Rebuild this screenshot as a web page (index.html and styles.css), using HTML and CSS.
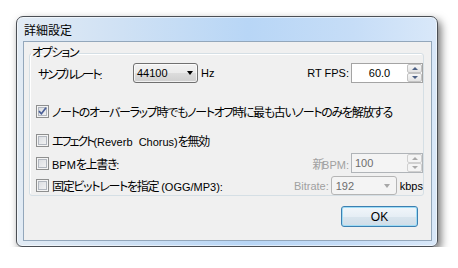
FILE: index.html
```html
<!DOCTYPE html>
<html lang="ja">
  <head>
    <meta charset="UTF-8" />
    <title>詳細設定</title>
    <link rel="stylesheet" href="styles.css">
  </head>
  <body>
    <div class="window">
      <div class="title">詳細設定</div>
      <div class="client">
        <fieldset class="group">
          <legend><span class="jp">オプション</span></legend>

          <div class="row row-rate">
            <span class="rate-label"><span class="jp kana">サンプルレート</span>:</span>
            <div class="combo combo-rate"><span class="combo-text">44100</span><i class="arrow"></i></div>
            <span class="unit">Hz</span>
            <span class="fill"></span>
            <span class="side-label">RT FPS:</span>
            <div class="spin">
              <span class="spin-value centered">60.0</span>
              <div class="spin-btns"><b class="up"></b><b class="down"></b></div>
            </div>
          </div>

          <div class="row row-overlap">
            <span class="check checked">
              <svg width="9" height="9" viewBox="0 0 9 9"><path d="M1 4.2 L3.4 6.8 L8 0.8" fill="none" stroke="#4a5f97" stroke-width="1.7"/></svg>
            </span>
            <span class="check-text jp">ノートのオーバーラップ時でもノートオフ時に最も古いノートのみを解放する</span>
          </div>

          <div class="row row-effect">
            <span class="check"></span>
            <span class="check-text"><span class="jp kana">エフェクト</span>(Reverb&nbsp;&nbsp;Chorus)<span class="jp">を無効</span></span>
          </div>

          <div class="row row-bpm">
            <span class="check"></span>
            <span class="check-text">BPM<span class="jp">を上書き</span>:</span>
            <span class="fill"></span>
            <span class="side-label disabled"><span class="jp tight">新</span>BPM:</span>
            <div class="spin spin-off">
              <span class="spin-value">100</span>
              <div class="spin-btns"><b class="up"></b><b class="down"></b></div>
            </div>
          </div>

          <div class="row row-bitrate">
            <span class="check"></span>
            <span class="check-text"><span class="jp">固定ビットレートを指定</span> (OGG/MP3):</span>
            <span class="fill"></span>
            <span class="side-label disabled">Bitrate:</span>
            <div class="combo combo-off"><span class="combo-text">192</span><i class="arrow"></i></div>
            <span class="unit">kbps</span>
          </div>
        </fieldset>

        <div class="actions">
          <button class="ok">OK</button>
        </div>
      </div>
    </div>
  </body>
</html>
```

FILE: styles.css
```css
body {
  margin: 0;
  background: #ffffff;
  font-family: "Liberation Sans", "Noto Sans CJK JP", sans-serif;
  font-size: 11px;
  font-feature-settings: "palt";
  color: #000000;
}

.jp {
  font-size: 12px;
  letter-spacing: -1.3px;
}

.kana {
  letter-spacing: -2px;
}

.tight {
  margin-right: -1px;
}

.window {
  margin: 16px 0 0 16px;
  width: 409px;
  height: 229px;
  padding: 0 5px 0 6px;
  border: 1px solid #4b4f55;
  border-radius: 7px 7px 6px 6px;
  background: linear-gradient(to right, #e2ebf4 0%, #cfe1f4 25%, #b8d6f6 55%, #c6ddf7 80%, #d9e8f9 100%);
  box-shadow: inset 0 0 0 1px rgba(255, 255, 255, 0.55), 3px 4px 9px rgba(0, 0, 0, 0.55);
}

.title {
  height: 24px;
  line-height: 25px;
  padding-left: 1px;
  font-family: "Noto Sans CJK JP", sans-serif;
  font-size: 12px;
}

.client {
  height: 198px;
  border: 1px solid #93a7bb;
  background: #f0f0f0;
}

.group {
  margin: 4px 7px 0 5px;
  padding: 0 0 0 6px;
  border: 1px solid #d5dfe5;
  border-radius: 3px;
  box-shadow: inset 1px 1px 0 #ffffff;
}

.group legend {
  padding: 0 1px;
  margin-left: -5px;
  line-height: 14px;
  height: 14px;
}

.row {
  display: flex;
  align-items: center;
  height: 20px;
}

.row-rate { margin-top: 3px; }
.row-overlap { margin-top: 18px; }
.row-effect { margin-top: 9px; }
.row-bpm { margin-top: 3px; }
.row-bitrate { margin-top: 3px; height: 19px; }

.rate-label {
  width: 95px;
  padding-left: 2px;
}

.fill {
  flex: 1;
}

.unit {
  margin-left: 3px;
}

.side-label {
  margin-right: 2px;
}

.disabled {
  color: #a0a0a0;
}

.combo {
  box-sizing: border-box;
  width: 65px;
  height: 20px;
  border: 1px solid #707070;
  border-radius: 3px;
  background: linear-gradient(#f2f2f2 0%, #ebebeb 50%, #dddddd 50%, #cfcfcf 100%);
  box-shadow: inset 0 0 0 1px rgba(255, 255, 255, 0.7);
  display: flex;
  align-items: center;
  padding-left: 3px;
}

.combo .arrow {
  margin-left: auto;
  margin-right: 4px;
  width: 0;
  height: 0;
  border-left: 3.5px solid transparent;
  border-right: 3.5px solid transparent;
  border-top: 4px solid #000000;
}

.combo-off {
  width: 66px;
  height: 19px;
  border-color: #b5b5b5;
  background: #f4f4f4;
  box-shadow: none;
  padding-left: 4px;
}

.combo-off .combo-text {
  color: #6d6d6d;
}

.combo-off .arrow {
  margin-right: 6px;
  border-top-color: #a7a7a7;
}

.spin {
  box-sizing: border-box;
  display: flex;
  width: 72px;
  height: 20px;
  border: 1px solid #a4a4a4;
  background: #ffffff;
}

.spin-value {
  flex: 1;
  line-height: 18px;
  padding-left: 3px;
}

.spin-value.centered {
  text-align: center;
  padding-left: 0;
}

.spin-btns {
  display: flex;
  flex-direction: column;
  width: 15px;
}

.spin-btns b {
  flex: 1;
  display: flex;
  align-items: center;
  justify-content: center;
  border: 1px solid #c3c3c3;
  border-radius: 2px;
  background: linear-gradient(#f7f7f7, #e3e3e3);
}

.spin-btns b::after {
  content: "";
  border-left: 3px solid transparent;
  border-right: 3px solid transparent;
}

.spin-btns .up::after {
  border-bottom: 3px solid #4d6185;
}

.spin-btns .down::after {
  border-top: 3px solid #4d6185;
}

.spin-off {
  border-color: #b0b4b8;
  background: #f4f4f4;
}

.spin-off .spin-value {
  color: #6d6d6d;
}

.spin-off .spin-btns b {
  border-color: #d0d0d0;
  background: #f4f4f4;
}

.spin-off .up::after {
  border-bottom-color: #a9a9a9;
}

.spin-off .down::after {
  border-top-color: #a9a9a9;
}

.check {
  box-sizing: border-box;
  width: 13px;
  height: 13px;
  border: 1px solid #8e8f8f;
  box-shadow: inset 0 0 0 1px #f4f4f4, inset 0 0 0 2px #b2b7bf;
  background: linear-gradient(135deg, #d6d9de, #f7f7f7);
  display: flex;
  align-items: center;
  justify-content: center;
}

.check-text {
  margin-left: 3px;
}

.actions {
  display: flex;
  justify-content: flex-end;
  margin: 10px 13px 0 0;
}

.ok {
  width: 77px;
  height: 21px;
  font-family: "Liberation Sans", sans-serif;
  font-size: 12px;
  color: #000000;
  border: 1px solid #3c7fb1;
  border-radius: 3px;
  background: linear-gradient(#f1f6fa 0%, #e6eef5 50%, #d9e5ee 50%, #d0dde8 100%);
  box-shadow: inset 0 0 0 1px #9fdcf5;
  padding: 0;
}
```
